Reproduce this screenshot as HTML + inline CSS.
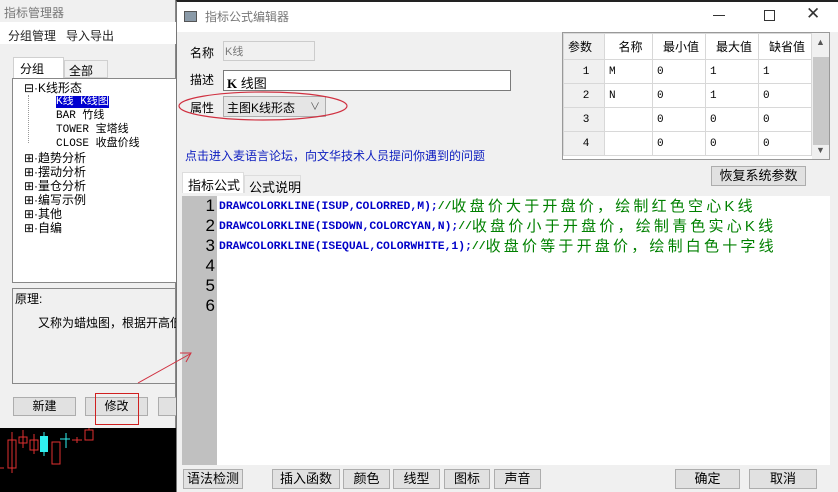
<!DOCTYPE html>
<html><head><meta charset="utf-8"><style>
*{box-sizing:border-box;margin:0;padding:0}
body{width:838px;height:492px;position:relative;overflow:hidden;background:#f0f0f0;font-family:"Liberation Sans","Noto Sans CJK SC",sans-serif;font-size:12px;color:#000}
.a{position:absolute;white-space:nowrap}
.btn{position:absolute;background:#e1e1e1;border:1px solid #adadad;text-align:center;line-height:17px;font-size:12px}
.code{font-family:"Liberation Mono",monospace;font-weight:bold;color:#0000c8;font-size:11.4px}
.code div{height:20px;line-height:20px;overflow:visible}
.cm{color:#008000;font-family:"Liberation Sans","Noto Sans CJK SC",sans-serif;font-weight:normal;font-size:15px;letter-spacing:3.2px;line-height:20px;vertical-align:top}
.sl{color:#008000;line-height:20px;vertical-align:top}
table{border-collapse:collapse}
td{border:1px solid #d8d8d8;height:24px;font-size:11px;font-family:"Liberation Mono",monospace;padding-left:4px}
</style></head><body>
<div class="a" style="left:0;top:0;width:176px;height:428px;background:#f0f0f0;border-right:1px solid #888"></div>
<div class="a" style="left:4px;top:4px;color:#777">指标管理器</div>
<div class="a" style="left:0;top:22px;width:176px;height:22px;background:#fff"></div>
<div class="a" style="left:8px;top:27px;color:#222">分组管理&nbsp;&nbsp;&nbsp;导入导出</div>
<div class="a" style="left:13px;top:57px;width:51px;height:22px;background:#fff;border:1px solid #d0d0d0;border-bottom:none;padding:2px 6px">分组</div>
<div class="a" style="left:64px;top:60px;width:44px;height:18px;border:1px solid #d0d0d0;padding:1px 4px">全部</div>
<div class="a" style="left:12px;top:78px;width:166px;height:205px;background:#fff;border:1px solid #888"></div>
<div class="a" style="left:24px;top:81px;line-height:14px;font-size:12px">
<div>⊟·K线形态</div>
<div style="padding-left:32px;font-family:'Liberation Mono','Noto Sans CJK SC';font-size:11px"><span style="background:#0000d0;color:#fff">K线 K线图</span></div>
<div style="padding-left:32px;font-family:'Liberation Mono','Noto Sans CJK SC';font-size:11px">BAR 竹线</div>
<div style="padding-left:32px;font-family:'Liberation Mono','Noto Sans CJK SC';font-size:11px">TOWER 宝塔线</div>
<div style="padding-left:32px;font-family:'Liberation Mono','Noto Sans CJK SC';font-size:11px">CLOSE 收盘价线</div>
<div>⊞·趋势分析</div><div>⊞·摆动分析</div><div>⊞·量仓分析</div><div>⊞·编写示例</div><div>⊞·其他</div><div>⊞·自编</div>
</div>
<div class="a" style="left:28px;top:95px;height:48px;border-left:1px dotted #999"></div>
<div class="a" style="left:12px;top:288px;width:166px;height:96px;border:1px solid #888"></div>
<div class="a" style="left:15px;top:290px">原理:</div>
<div class="a" style="left:38px;top:314px">又称为蜡烛图，根据开高低</div>
<div class="btn" style="left:13px;top:397px;width:63px;height:19px">新建</div>
<div class="btn" style="left:85px;top:397px;width:63px;height:19px">修改</div>
<div class="btn" style="left:158px;top:397px;width:30px;height:19px"></div>
<div class="a" style="left:95px;top:393px;width:44px;height:32px;border:1px solid #d02020"></div>
<div class="a" style="left:0;top:428px;width:176px;height:64px;background:#000"></div>
<svg class="a" style="left:0;top:428px" width="176" height="64">
<g stroke="#e03030" fill="none"><rect x="8" y="12" width="8" height="28"/><line x1="12" y1="4" x2="12" y2="45"/><rect x="19" y="9" width="8" height="6"/><line x1="23" y1="2" x2="23" y2="20"/><rect x="30" y="12" width="8" height="10"/><line x1="34" y1="6" x2="34" y2="26"/><rect x="52" y="14" width="8" height="22"/><line x1="72" y1="12" x2="82" y2="12"/><line x1="77" y1="9" x2="77" y2="15"/><rect x="85" y="2" width="8" height="10"/><line x1="89" y1="0" x2="89" y2="2"/><line x1="0" y1="40" x2="4" y2="40"/></g>
<rect x="40" y="8" width="8" height="16" fill="#30f0f0"/><line x1="44" y1="4" x2="44" y2="28" stroke="#30f0f0"/><line x1="60" y1="11" x2="70" y2="11" stroke="#30f0f0"/><line x1="66" y1="5" x2="66" y2="20" stroke="#30f0f0"/>
</svg>
<div class="a" style="left:176px;top:0;width:662px;height:492px;background:#f0f0f0;border-left:1px solid #777;border-top:2px solid #222"></div>
<div class="a" style="left:177px;top:2px;width:661px;height:30px;background:#fff"></div>
<div class="a" style="left:184px;top:11px;width:13px;height:11px;background:#8a9aa8;border:1px solid #555"></div>
<div class="a" style="left:205px;top:8px;color:#777">指标公式编辑器</div>
<div class="a" style="left:713px;top:15px;width:12px;height:1px;background:#333"></div>
<div class="a" style="left:764px;top:10px;width:11px;height:11px;border:1px solid #333"></div>
<div class="a" style="left:806px;top:4px;font-size:17px;color:#333">✕</div>
<div class="a" style="left:190px;top:44px">名称</div>
<div class="a" style="left:223px;top:41px;width:92px;height:20px;border:1px solid #ccc;color:#777;font-size:11px;padding:1px 1px">K线</div>
<div class="a" style="left:190px;top:71px">描述</div>
<div class="a" style="left:223px;top:70px;width:288px;height:21px;background:#fff;border:1px solid #7a7a7a;padding:2px 3px;font-size:13px"><b style="font-family:'Liberation Serif'">K</b> 线图</div>
<div class="a" style="left:190px;top:99px">属性</div>
<div class="a" style="left:223px;top:96px;width:103px;height:21px;background:#e5e5e5;border:1px solid #adadad;padding:2px 3px;font-size:12px">主图K线形态<span style="position:absolute;left:86px;top:1px;color:#555;font-size:10px">∨</span></div>
<svg class="a" style="left:178px;top:90px" width="174" height="34"><ellipse cx="85" cy="16" rx="84" ry="14" fill="none" stroke="#d03040" stroke-width="1.2"/></svg>
<div class="a" style="left:185px;top:147px;color:#1020c0;font-size:12px">点击进入麦语言论坛，向文华技术人员提问你遇到的问题</div>
<div class="a" style="left:562px;top:32px;width:268px;height:128px;background:#fff;border:1px solid #999;overflow:hidden">
<table style="position:absolute;left:0;top:0">
<tr style="height:26px"><td style="width:41px;font-family:'Liberation Sans','Noto Sans CJK SC';font-size:12px;background:#f0f0f0">参数</td><td style="width:48px;font-family:'Liberation Sans','Noto Sans CJK SC';font-size:12px;text-align:center">名称</td><td style="width:53px;font-family:'Liberation Sans','Noto Sans CJK SC';font-size:12px;text-align:center">最小值</td><td style="width:53px;font-family:'Liberation Sans','Noto Sans CJK SC';font-size:12px;text-align:center">最大值</td><td style="width:53px;font-family:'Liberation Sans','Noto Sans CJK SC';font-size:12px;text-align:center">缺省值</td></tr>
<tr><td style="background:#f0f0f0;text-align:center">1</td><td>M</td><td>0</td><td>1</td><td>1</td></tr>
<tr><td style="background:#f0f0f0;text-align:center">2</td><td>N</td><td>0</td><td>1</td><td>0</td></tr>
<tr><td style="background:#f0f0f0;text-align:center">3</td><td></td><td>0</td><td>0</td><td>0</td></tr>
<tr><td style="background:#f0f0f0;text-align:center">4</td><td></td><td>0</td><td>0</td><td>0</td></tr>
</table>
<div class="a" style="left:249px;top:0;width:18px;height:128px;background:#f0f0f0"></div>
<div class="a" style="left:250px;top:24px;width:16px;height:88px;background:#c8c8c8"></div>
<div class="a" style="left:253px;top:4px;font-size:9px;color:#555">▲</div>
<div class="a" style="left:253px;top:112px;font-size:9px;color:#555">▼</div>
</div>
<div class="btn" style="left:711px;top:166px;width:95px;height:20px;font-size:13px">恢复系统参数</div>
<div class="a" style="left:182px;top:172px;width:62px;height:21px;background:#fff;border:1px solid #ddd;border-bottom:none;padding:2px 5px;font-size:13px">指标公式</div>
<div class="a" style="left:244px;top:175px;width:57px;height:18px;border:1px solid #ddd;border-bottom:none;padding:1px 4px;font-size:13px">公式说明</div>
<div class="a" style="left:182px;top:196px;width:648px;height:269px;background:#fff"></div>
<div class="a" style="left:182px;top:196px;width:35px;height:269px;background:#c0c0c0"></div>
<div class="a" style="left:182px;top:196px;width:33px;text-align:right;font-size:17px;line-height:20px">1<br>2<br>3<br>4<br>5<br>6</div>
<div class="a code" style="left:219px;top:197px">
<div>DRAWCOLORKLINE(ISUP,COLORRED,M);<span class="sl">//</span><span class="cm">收盘价大于开盘价，绘制红色空心K线</span></div>
<div>DRAWCOLORKLINE(ISDOWN,COLORCYAN,N);<span class="sl">//</span><span class="cm">收盘价小于开盘价，绘制青色实心K线</span></div>
<div>DRAWCOLORKLINE(ISEQUAL,COLORWHITE,1);<span class="sl">//</span><span class="cm">收盘价等于开盘价，绘制白色十字线</span></div>
</div>
<svg class="a" style="left:130px;top:345px" width="70" height="45"><line x1="8" y1="38" x2="60" y2="9" stroke="#d03040" stroke-width="1"/><polyline points="50,8 61,8 56,17" fill="none" stroke="#d03040"/></svg>
<div class="btn" style="left:183px;top:469px;width:60px;height:20px;font-size:13px">语法检测</div>
<div class="btn" style="left:272px;top:469px;width:68px;height:20px;font-size:13px">插入函数</div>
<div class="btn" style="left:343px;top:469px;width:47px;height:20px;font-size:13px">颜色</div>
<div class="btn" style="left:393px;top:469px;width:47px;height:20px;font-size:13px">线型</div>
<div class="btn" style="left:444px;top:469px;width:46px;height:20px;font-size:13px">图标</div>
<div class="btn" style="left:494px;top:469px;width:47px;height:20px;font-size:13px">声音</div>
<div class="btn" style="left:675px;top:469px;width:65px;height:20px;font-size:13px">确定</div>
<div class="btn" style="left:749px;top:469px;width:68px;height:20px;font-size:13px">取消</div>
</body></html>
